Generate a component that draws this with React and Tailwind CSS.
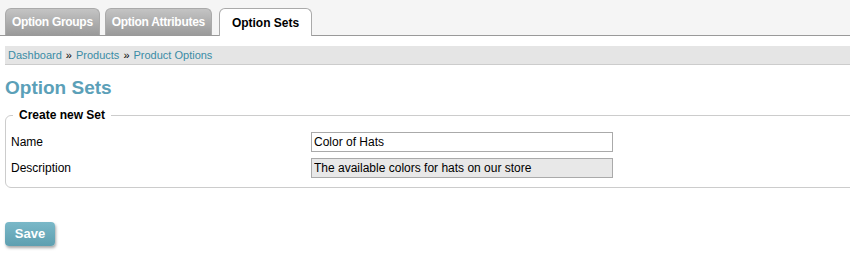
import React from 'react';

const tabs = [
  { label: 'Option Groups', active: false },
  { label: 'Option Attributes', active: false },
  { label: 'Option Sets', active: true },
];

export default function App() {
  return (
    <div className="w-[850px] h-[261px] bg-white overflow-hidden" style={{ fontFamily: '"Liberation Sans", Arial, sans-serif' }}>
      <div className="bg-[#f5f5f5] border-b border-[#999] h-[36px] flex items-end gap-[5px] pl-[5px]">
        {tabs.map(t => (
          <div
            key={t.label}
            className={
              t.active
                ? 'h-[28px] -mb-px ml-[2px] px-[12px] flex items-center rounded-t-[6px] border border-b-0 border-[#aaa] bg-white text-black font-bold text-[12px]'
                : 'h-[27px] px-[6px] flex items-center rounded-t-[6px] border border-b-0 border-[#aaa] bg-gradient-to-b from-[#c4c4c4] to-[#9a9a9a] text-white font-bold text-[12px] tracking-[-0.3px]'
            }
          >
            {t.label}
          </div>
        ))}
      </div>

      <div className="mt-[10px] ml-[5px] h-[19px] bg-[#e5e5e5] border-b border-[#ccc] flex items-center pl-[3px] text-[11px] text-[#3a8ca6]">
        Dashboard <span className="text-black mx-[4px]">»</span> Products <span className="text-black mx-[4px]">»</span> Product Options
      </div>

      <h1 className="mt-[12px] ml-[5px] text-[19px] font-bold text-[#5ba0b8] leading-[22px]">Option Sets</h1>

      <fieldset className="mt-[7px] ml-[5px] w-[860px] border border-[#ccc] rounded-[6px] pl-[5px] pb-[6px] pt-[5px]">
        <legend className="ml-[2px] px-[6px] text-[12px] font-bold text-black">Create new Set</legend>
        <div className="flex items-center h-[26px] text-[12px] text-black">
          <div className="w-[300px]">Name</div>
          <input
            readOnly
            value="Color of Hats"
            className="w-[302px] h-[20px] border border-[#aaa] bg-white px-[2px] text-[12px] text-black outline-none"
          />
        </div>
        <div className="flex items-center h-[26px] text-[12px] text-black">
          <div className="w-[300px]">Description</div>
          <input
            readOnly
            value="The available colors for hats on our store"
            className="w-[302px] h-[20px] border border-[#aaa] bg-[#e8e8e8] px-[2px] text-[12px] text-black outline-none"
          />
        </div>
      </fieldset>

      <button className="mt-[34px] ml-[5px] w-[50px] h-[24px] rounded-[4px] bg-gradient-to-b from-[#7ab8c8] to-[#5e9fb0] text-white font-bold text-[13px] shadow-[1px_2px_3px_rgba(0,0,0,0.35)]">
        Save
      </button>
    </div>
  );
}
